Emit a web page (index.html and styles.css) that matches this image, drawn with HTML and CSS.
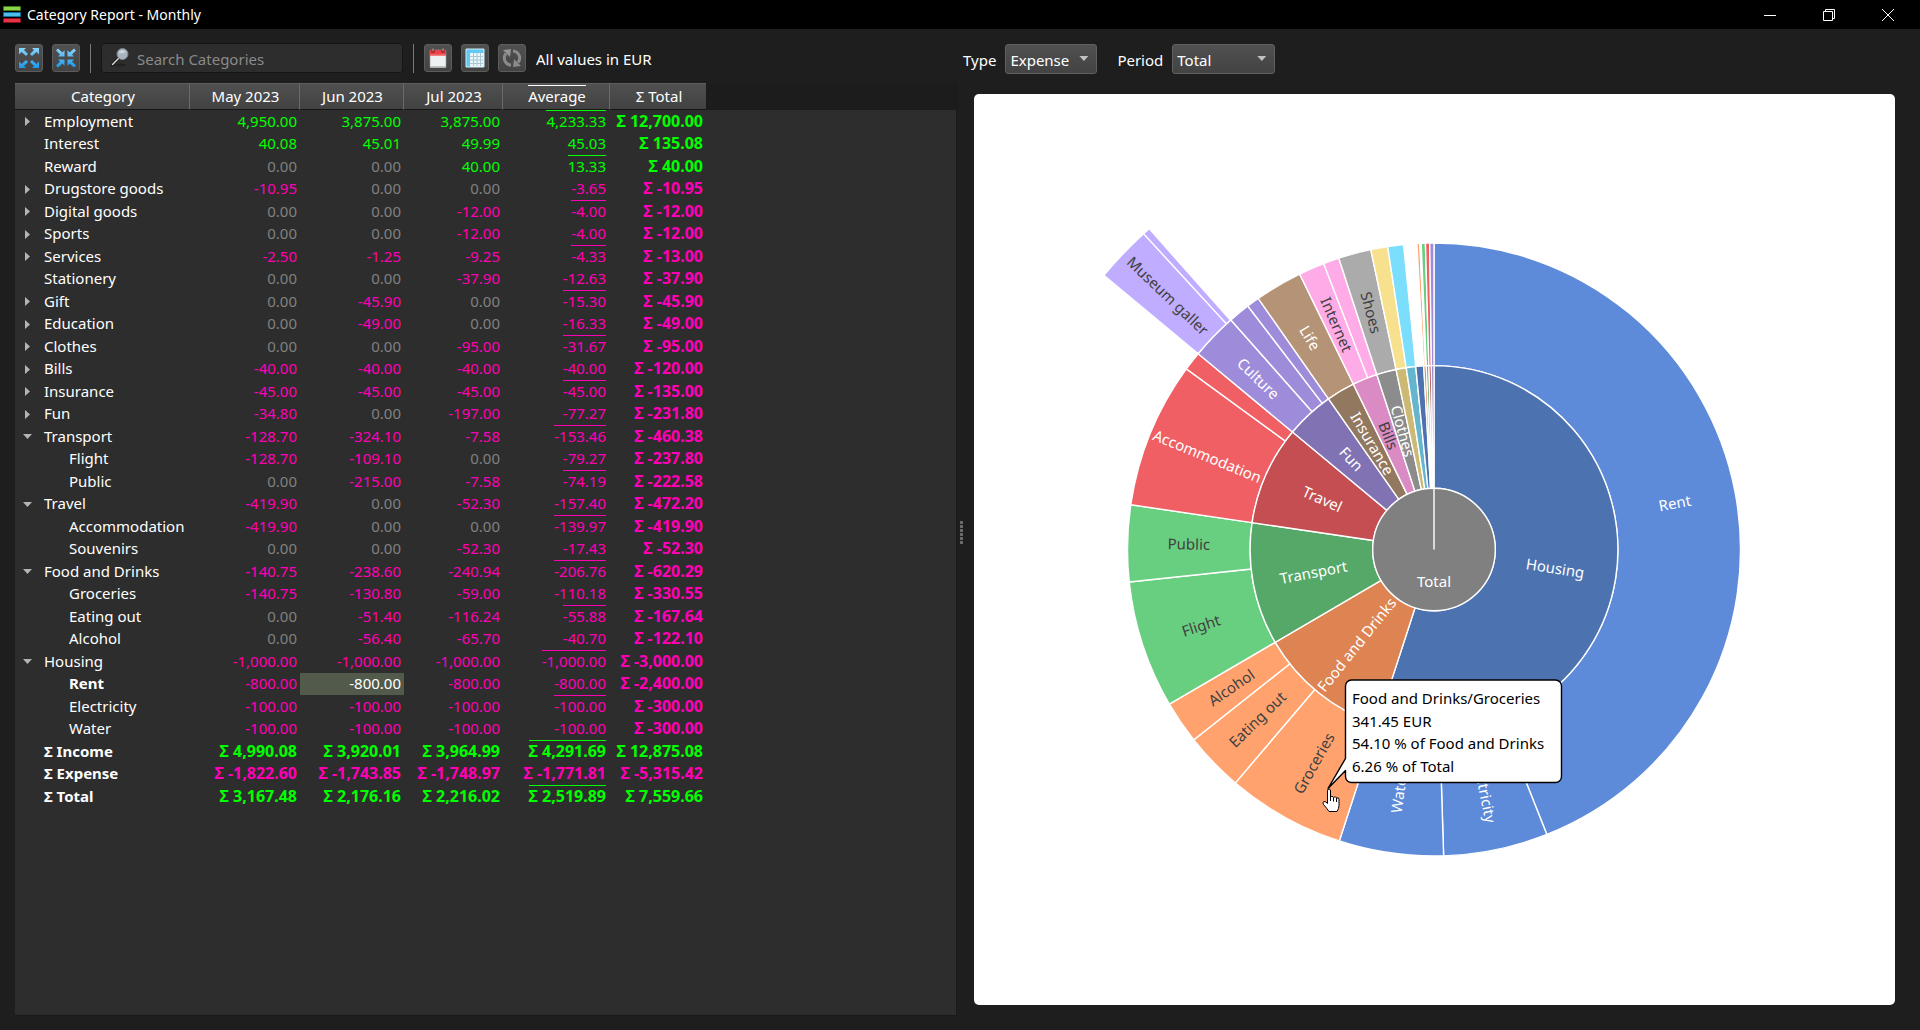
FILE: index.html
```html
<!DOCTYPE html>
<html lang="en">
<head>
<meta charset="utf-8">
<title>Category Report - Monthly</title>
<link rel="stylesheet" href="styles.css">
</head>
<body>
<header class="titlebar">
  <svg class="app-icon" viewBox="0 0 18 18" aria-hidden="true">
    <rect x="0" y="0" width="18" height="5" rx="1" fill="#3f7d1c"/><rect x="1" y="1" width="16" height="3" fill="#8fd14a"/>
    <rect x="0" y="6" width="18" height="5" rx="1" fill="#14709e"/><rect x="1" y="7" width="16" height="3" fill="#4dbdea"/>
    <rect x="0" y="12" width="18" height="5" rx="1" fill="#8a0f1c"/><rect x="1" y="13" width="16" height="3" fill="#e63345"/>
  </svg>
  <h1 class="title">Category Report - Monthly</h1>
  <div class="window-buttons">
    <button type="button" class="window-button" aria-label="Minimize"><svg viewBox="0 0 14 14"><path d="M1 7.500H13"/></svg></button>
    <button type="button" class="window-button" aria-label="Restore"><svg viewBox="0 0 14 14"><path d="M1.500 3.500H10.500V12.500H1.500ZM3.500 3.500V1.500H12.500V10.500H10.500"/></svg></button>
    <button type="button" class="window-button" aria-label="Close"><svg viewBox="0 0 14 14"><path d="M1 1L13 13M13 1L1 13"/></svg></button>
  </div>
</header>
<main class="workspace">
  <section class="report">
    <div class="toolbar">
      <div class="tool-group">
        <button type="button" class="tool-button" aria-label="Expand all">
          <svg viewBox="0 0 20 20"><defs><linearGradient id="blue" gradientUnits="userSpaceOnUse" x1="0" y1="0" x2="0" y2="20"><stop offset="0" stop-color="#8ad4fb"/><stop offset="1" stop-color="#1a97ec"/></linearGradient></defs>
          <path fill="url(#blue)" d="M0 0H7L5 2L9 6L7 8L2.500 4L0 6.500ZM20 0H13L15 2L11 6L13 8L17.500 4L20 6.500ZM0 20H7L5 18L9 14L7 12L2.500 16L0 13.500ZM20 20H13L15 18L11 14L13 12L17.500 16L20 13.500Z"/></svg>
        </button>
        <button type="button" class="tool-button" aria-label="Collapse all">
          <svg viewBox="0 0 20 20"><path fill="url(#blue)" d="M8.500 8.500H2L4 6.500L0 2.500L2 .5L6.500 4.500L8.500 2ZM11.500 8.500H18L16 6.500L20 2.500L18 .5L13.500 4.500L11.500 2ZM8.500 11.500H2L4 13.500L0 17.500L2 19.500L6.500 15.500L8.500 18ZM11.500 11.500H18L16 13.500L20 17.500L18 19.500L13.500 15.500L11.500 18Z"/></svg>
        </button>
      </div>
      <span class="divider"></span>
      <label class="search">
        <svg viewBox="0 0 20 20" aria-hidden="true"><ellipse cx="9" cy="17" rx="6" ry="1.500" fill="#222"/><path d="M7 11L1 17" stroke="#111" stroke-width="3" stroke-linecap="round"/><path d="M7.500 10.500L1.500 16.500" stroke="#d8d8d8" stroke-width="1.500" stroke-linecap="round"/><circle cx="11.500" cy="6" r="5.500" fill="#a9b4bf" stroke="#79838c"/><path d="M8 4Q11 0 15 4Q12 6 8 5Z" fill="#ccd5dd"/></svg>
        <input type="text" placeholder="Search Categories" aria-label="Search Categories">
      </label>
      <span class="divider"></span>
      <div class="tool-group">
        <button type="button" class="tool-button" aria-label="Monthly">
          <svg viewBox="0 0 20 20"><rect x="2" y="2" width="16" height="17.500" rx="1" fill="#eef1f1" stroke="#999" stroke-width=".6"/><path d="M2 2H18V8H2Z" fill="#e8444a"/><path d="M2 6.500H18V8H2Z" fill="#f77d80"/><circle cx="5" cy="3" r="1.800" fill="#8d1318"/><circle cx="15" cy="3" r="1.800" fill="#8d1318"/><path d="M5 .5V3.500M15 .5V3.500" stroke="#bbb"/><path d="M2 18H18V19.500H2Z" fill="#bcc6c6"/></svg>
        </button>
        <button type="button" class="tool-button" aria-label="Table view">
          <svg viewBox="0 0 20 20"><rect x="1" y="1" width="18" height="18" fill="#e8f7fd"/><path d="M1 1H19V5H5V19H1Z" fill="#62c9f3"/><path d="M5 8.500H18M5 12H18M5 15.500H18M8.500 5V18M12 5V18M15.500 5V18" stroke="#a9c6d2"/><path d="M1 1H19V19H1Z" fill="none" stroke="#cfeefb"/></svg>
        </button>
        <button type="button" class="tool-button" aria-label="Refresh" disabled>
          <svg viewBox="0 0 20 20"><g fill="none" stroke="#8a8a8a" stroke-width="3"><path d="M9 17A7 7 0 0 1 4 5.500"/><path d="M11 3A7 7 0 0 1 16 14.500"/></g><path d="M1 2L9 1L8 9Z" fill="#949494"/><path d="M19 18L11 19L12 11Z" fill="#8a8a8a"/></svg>
        </button>
      </div>
      <span class="note">All values in EUR</span>
    </div>
    <div class="table-pane">
      <table class="report-table">
        <colgroup><col class="c-category"><col class="c-may"><col class="c-jun"><col class="c-jul"><col class="c-average"><col class="c-total"></colgroup>
        <thead><tr><th scope="col">Category</th><th scope="col">May 2023</th><th scope="col">Jun 2023</th><th scope="col">Jul 2023</th><th scope="col"><span class="bar">Average</span></th><th scope="col">Σ Total</th></tr></thead>
        <tbody>
          <tr class="in"><th scope="row"><button type="button" class="twist" aria-label="Expand Employment"></button>Employment</th><td>4,950.00</td><td>3,875.00</td><td>3,875.00</td><td><span class="bar">4,233.33</span></td><td>Σ 12,700.00</td></tr>
          <tr class="in"><th scope="row">Interest</th><td>40.08</td><td>45.01</td><td>49.99</td><td><span class="bar">45.03</span></td><td>Σ 135.08</td></tr>
          <tr class="in"><th scope="row">Reward</th><td class="zero">0.00</td><td class="zero">0.00</td><td>40.00</td><td><span class="bar">13.33</span></td><td>Σ 40.00</td></tr>
          <tr><th scope="row"><button type="button" class="twist" aria-label="Expand Drugstore goods"></button>Drugstore goods</th><td>-10.95</td><td class="zero">0.00</td><td class="zero">0.00</td><td><span class="bar">-3.65</span></td><td>Σ -10.95</td></tr>
          <tr><th scope="row"><button type="button" class="twist" aria-label="Expand Digital goods"></button>Digital goods</th><td class="zero">0.00</td><td class="zero">0.00</td><td>-12.00</td><td><span class="bar">-4.00</span></td><td>Σ -12.00</td></tr>
          <tr><th scope="row"><button type="button" class="twist" aria-label="Expand Sports"></button>Sports</th><td class="zero">0.00</td><td class="zero">0.00</td><td>-12.00</td><td><span class="bar">-4.00</span></td><td>Σ -12.00</td></tr>
          <tr><th scope="row"><button type="button" class="twist" aria-label="Expand Services"></button>Services</th><td>-2.50</td><td>-1.25</td><td>-9.25</td><td><span class="bar">-4.33</span></td><td>Σ -13.00</td></tr>
          <tr><th scope="row">Stationery</th><td class="zero">0.00</td><td class="zero">0.00</td><td>-37.90</td><td><span class="bar">-12.63</span></td><td>Σ -37.90</td></tr>
          <tr><th scope="row"><button type="button" class="twist" aria-label="Expand Gift"></button>Gift</th><td class="zero">0.00</td><td>-45.90</td><td class="zero">0.00</td><td><span class="bar">-15.30</span></td><td>Σ -45.90</td></tr>
          <tr><th scope="row"><button type="button" class="twist" aria-label="Expand Education"></button>Education</th><td class="zero">0.00</td><td>-49.00</td><td class="zero">0.00</td><td><span class="bar">-16.33</span></td><td>Σ -49.00</td></tr>
          <tr><th scope="row"><button type="button" class="twist" aria-label="Expand Clothes"></button>Clothes</th><td class="zero">0.00</td><td class="zero">0.00</td><td>-95.00</td><td><span class="bar">-31.67</span></td><td>Σ -95.00</td></tr>
          <tr><th scope="row"><button type="button" class="twist" aria-label="Expand Bills"></button>Bills</th><td>-40.00</td><td>-40.00</td><td>-40.00</td><td><span class="bar">-40.00</span></td><td>Σ -120.00</td></tr>
          <tr><th scope="row"><button type="button" class="twist" aria-label="Expand Insurance"></button>Insurance</th><td>-45.00</td><td>-45.00</td><td>-45.00</td><td><span class="bar">-45.00</span></td><td>Σ -135.00</td></tr>
          <tr><th scope="row"><button type="button" class="twist" aria-label="Expand Fun"></button>Fun</th><td>-34.80</td><td class="zero">0.00</td><td>-197.00</td><td><span class="bar">-77.27</span></td><td>Σ -231.80</td></tr>
          <tr><th scope="row"><button type="button" class="twist open" aria-label="Collapse Transport"></button>Transport</th><td>-128.70</td><td>-324.10</td><td>-7.58</td><td><span class="bar">-153.46</span></td><td>Σ -460.38</td></tr>
          <tr class="child"><th scope="row">Flight</th><td>-128.70</td><td>-109.10</td><td class="zero">0.00</td><td><span class="bar">-79.27</span></td><td>Σ -237.80</td></tr>
          <tr class="child"><th scope="row">Public</th><td class="zero">0.00</td><td>-215.00</td><td>-7.58</td><td><span class="bar">-74.19</span></td><td>Σ -222.58</td></tr>
          <tr><th scope="row"><button type="button" class="twist open" aria-label="Collapse Travel"></button>Travel</th><td>-419.90</td><td class="zero">0.00</td><td>-52.30</td><td><span class="bar">-157.40</span></td><td>Σ -472.20</td></tr>
          <tr class="child"><th scope="row">Accommodation</th><td>-419.90</td><td class="zero">0.00</td><td class="zero">0.00</td><td><span class="bar">-139.97</span></td><td>Σ -419.90</td></tr>
          <tr class="child"><th scope="row">Souvenirs</th><td class="zero">0.00</td><td class="zero">0.00</td><td>-52.30</td><td><span class="bar">-17.43</span></td><td>Σ -52.30</td></tr>
          <tr><th scope="row"><button type="button" class="twist open" aria-label="Collapse Food and Drinks"></button>Food and Drinks</th><td>-140.75</td><td>-238.60</td><td>-240.94</td><td><span class="bar">-206.76</span></td><td>Σ -620.29</td></tr>
          <tr class="child"><th scope="row">Groceries</th><td>-140.75</td><td>-130.80</td><td>-59.00</td><td><span class="bar">-110.18</span></td><td>Σ -330.55</td></tr>
          <tr class="child"><th scope="row">Eating out</th><td class="zero">0.00</td><td>-51.40</td><td>-116.24</td><td><span class="bar">-55.88</span></td><td>Σ -167.64</td></tr>
          <tr class="child"><th scope="row">Alcohol</th><td class="zero">0.00</td><td>-56.40</td><td>-65.70</td><td><span class="bar">-40.70</span></td><td>Σ -122.10</td></tr>
          <tr><th scope="row"><button type="button" class="twist open" aria-label="Collapse Housing"></button>Housing</th><td>-1,000.00</td><td>-1,000.00</td><td>-1,000.00</td><td><span class="bar">-1,000.00</span></td><td>Σ -3,000.00</td></tr>
          <tr class="child current"><th scope="row">Rent</th><td>-800.00</td><td class="selected">-800.00</td><td>-800.00</td><td><span class="bar">-800.00</span></td><td>Σ -2,400.00</td></tr>
          <tr class="child"><th scope="row">Electricity</th><td>-100.00</td><td>-100.00</td><td>-100.00</td><td><span class="bar">-100.00</span></td><td>Σ -300.00</td></tr>
          <tr class="child"><th scope="row">Water</th><td>-100.00</td><td>-100.00</td><td>-100.00</td><td><span class="bar">-100.00</span></td><td>Σ -300.00</td></tr>
          <tr class="in sum"><th scope="row">Σ Income</th><td>Σ 4,990.08</td><td>Σ 3,920.01</td><td>Σ 3,964.99</td><td><span class="bar">Σ 4,291.69</span></td><td>Σ 12,875.08</td></tr>
          <tr class="sum"><th scope="row">Σ Expense</th><td>Σ -1,822.60</td><td>Σ -1,743.85</td><td>Σ -1,748.97</td><td><span class="bar">Σ -1,771.81</span></td><td>Σ -5,315.42</td></tr>
          <tr class="in sum"><th scope="row">Σ Total</th><td>Σ 3,167.48</td><td>Σ 2,176.16</td><td>Σ 2,216.02</td><td><span class="bar">Σ 2,519.89</span></td><td>Σ 7,559.66</td></tr>
        </tbody>
      </table>
    </div>
  </section>
  <div class="splitter" aria-hidden="true"><i></i><i></i><i></i><i></i><i></i><i></i></div>
  <section class="chart">
    <div class="filters">
      <label for="type">Type</label>
      <span class="dropdown type"><select id="type"><option>Expense</option><option>Income</option></select></span>
      <label for="period">Period</label>
      <span class="dropdown period"><select id="period"><option>Total</option><option>May 2023</option><option>Jun 2023</option><option>Jul 2023</option></select></span>
    </div>
    <div class="chart-card">
      <svg class="sunburst" viewBox="-460 -455.5 921 911" role="img" aria-label="Expenses by category">
        <g id="slices"></g>
        <g id="labels"></g>
        <g class="tip">
          <path d="M-82.500 130.500H121.500A6 6 0 0 1 127.500 136.500V227A6 6 0 0 1 121.500 233H-82.500A6 6 0 0 1 -88.500 227V221L-106 239L-88.500 209V136.500A6 6 0 0 1 -82.500 130.500Z"/>
          <text x="-82" y="154">Food and Drinks/Groceries</text>
          <text x="-82" y="177">341.45 EUR</text>
          <text x="-82" y="199">54.10 % of Food and Drinks</text>
          <text x="-82" y="222">6.26 % of Total</text>
        </g>
        <path class="hand" d="M-106.500 241.500Q-106.500 239.500 -105 239.500T-103.500 241.500V247.500Q-102 245.500 -100.500 248Q-98.500 246 -97.500 248.500Q-95 247.500 -95 250V256Q-95 259 -97 262H-105Q-107 259 -110.500 255Q-112 252.500 -110 252Q-108 252 -106.500 254Z"/>
        <path class="fingers" d="M-103.500 247V251.500M-100.500 248V252M-97.500 248.500V252.500"/>
      </svg>
    </div>
  </section>
</main>
<script src="chart.js"></script>
</body>
</html>
```
FILE: styles.css
```css
* { box-sizing: border-box; }

body {
  margin: 0;
  min-height: 100vh;
  display: flex;
  flex-direction: column;
  background: #1e1e1e;
  color: #fff;
  font: 15px/22px "Noto Sans", "Open Sans", sans-serif;
}

button, input, select { font: inherit; color: inherit; }

.titlebar {
  display: flex;
  align-items: center;
  height: 29px;
  padding: 0 3px;
  background: #000;
}
.app-icon { width: 18px; height: 18px; }
.title { margin: 0 auto 0 6px; font-size: 14px; font-weight: 400; }
.window-buttons { display: flex; }
.window-button {
  width: 59px;
  height: 29px;
  padding: 0;
  border: 0;
  background: none;
  display: grid;
  place-items: center;
}
.window-button svg { width: 14px; height: 14px; fill: none; stroke: #fff; stroke-width: 1; }

.workspace {
  flex: 1;
  display: grid;
  grid-template-columns: minmax(0, 942fr) 6px minmax(0, 957fr);
  padding-left: 15px;
}

.report { display: flex; flex-direction: column; padding: 14px 0; }
.toolbar { display: flex; align-items: center; gap: 10px; height: 30px; margin-bottom: 10px; }
.tool-group { display: flex; gap: 9px; }
.tool-button {
  width: 28px;
  height: 28px;
  padding: 3px;
  border: 1px solid #5c5c5c;
  border-radius: 3px;
  background: linear-gradient(#505050, #434343);
}
.tool-button svg { display: block; width: 20px; height: 20px; }
.divider { width: 1px; height: 29px; background: #7a7a7a; }
.search {
  flex: 0 0 302px;
  display: flex;
  align-items: center;
  gap: 6px;
  height: 30px;
  padding: 0 9px;
  border: 1px solid #161616;
  border-radius: 3px;
  background: #2d2d2d;
}
.search svg { width: 20px; height: 20px; }
.search input { flex: 1; min-width: 0; padding: 2px 0 0; border: 0; outline: 0; background: none; }
.search input::placeholder { color: #8a8a8a; opacity: 1; }
.note { padding-top: 2px; }

.table-pane { flex: 1; background: linear-gradient(#1c1c1c 27px, #2d2d2d 27px); border-right: 1px solid #191919; border-bottom: 1px solid #191919; }
.report-table { width: 691px; table-layout: fixed; border-collapse: separate; border-spacing: 0; }
.c-category { width: 175px; }
.c-may { width: 110px; }
.c-jun { width: 104px; }
.c-jul { width: 99px; }
.c-average { width: 107px; }
.c-total { width: 96px; }

thead th {
  height: 27px;
  padding: 1px 0 2px 2px;
  font-weight: 400;
  line-height: 22px;
  vertical-align: top;
  background: linear-gradient(#505050, #424242);
  border-top: 1px solid #5e5e5e;
  border-bottom: 1px solid #161616;
  border-right: 1px solid #6a6a6a;
}
thead th:last-child { border-right: 0; }
thead .bar { display: inline-block; border-top: 1px solid; line-height: 20px; vertical-align: top; }

tbody tr { height: 22px; color: #ff00b4; line-height: 21px; }
tbody tr:nth-child(odd) { height: 23px; }
tbody th, tbody td { padding: 0 3px 1px 0; white-space: nowrap; vertical-align: bottom; text-align: right; }
tbody th { padding: 0 0 1px 29px; position: relative; font-weight: 400; text-align: left; color: #fff; }
tbody td:nth-child(5) { padding-right: 4px; }
tbody .bar { display: inline-block; vertical-align: bottom; }
tbody tr:nth-child(odd) .bar { border-top: 1px solid; }
tbody td:last-child, .sum th, .sum td, .current th { font-weight: 700; }
tbody td:last-child, .sum td { font-size: 16px; }
tbody .in { color: #0f0; }
tbody .child th { padding-left: 54px; }
tbody .zero { color: #808080; }
tbody .selected { background: #525a4b; color: #fff; }

/* Expander arrow in the free space before a category name */
.twist {
  position: absolute;
  left: 10px;
  top: 7px;
  width: 5px;
  height: 9px;
  padding: 0;
  border: 0;
  background: #b4b4b4;
  clip-path: polygon(0 0, 100% 50%, 0 100%);
}
.twist.open { left: 8px; top: 9px; width: 9px; height: 5px; clip-path: polygon(0 0, 100% 0, 50% 100%); }

.splitter { display: flex; flex-direction: column; justify-content: center; align-items: flex-end; gap: 1px; padding-top: 6px; }
.splitter i { width: 3px; height: 3px; background: #6a6a6a; }

.chart { display: flex; flex-direction: column; padding: 15px 25px 25px 0; }
.filters { display: flex; align-items: center; gap: 9px; height: 30px; margin-bottom: 20px; }
.filters label { padding-top: 2px; }
.dropdown { position: relative; height: 30px; }
.dropdown.type { width: 92px; margin-right: 11px; }
.dropdown.period { width: 103px; }
.dropdown select {
  width: 100%;
  height: 30px;
  padding: 2px 4px 0;
  appearance: none;
  border: 1px solid #606060;
  border-radius: 3px;
  background: linear-gradient(#505050, #434343);
}
.dropdown::after {
  content: "";
  position: absolute;
  right: 9px;
  top: 12px;
  width: 9px;
  height: 5px;
  background: #c0c0c0;
  clip-path: polygon(0 0, 100% 0, 50% 100%);
  pointer-events: none;
}

.chart-card { flex: 1; display: flex; margin-left: 11px; border-radius: 5px; background: #fff; }
.sunburst { flex: 1; width: 100%; min-height: 400px; }
.slice { stroke: #fff; stroke-width: 1.4px; }
.label { font-size: 15px; text-anchor: middle; fill: #fff; }
.label.dark { fill: #404040; }
.tip path { fill: #fff; stroke: #000; stroke-width: 1.4px; stroke-linejoin: round; }
.tip text { font-size: 15px; fill: #000; }
.hand { fill: #fff; stroke: #000; }
.fingers { fill: none; stroke: #000; }
```
FILE: chart.js
```js
// Slices: ring, start angle, end angle (degrees clockwise from the top), colour, label, dark label
const RING = 61.3;
const SLICES = [
  [3, 309.7, 317.4, '#c0adff', 'Museum galler', true],
  [3, 317.4, 318.4, '#c0adff'],
  [2, 0, 158.4, '#5d8bd9', 'Rent'],
  [2, 158.4, 178.2, '#5d8bd9', 'Electricity'],
  [2, 178.2, 198, '#5d8bd9', 'Water'],
  [2, 198, 220.4, '#ffa26d', 'Groceries', true],
  [2, 220.4, 231.6, '#ffa26d', 'Eating out', true],
  [2, 231.6, 239.7, '#ffa26d', 'Alcohol', true],
  [2, 239.7, 263.9, '#69cf80', 'Flight', true],
  [2, 263.9, 278.4, '#69cf80', 'Public', true],
  [2, 278.4, 306.1, '#f05f64', 'Accommodation'],
  [2, 306.1, 309.7, '#f05f64'],
  [2, 309.7, 318.5, '#9e8cdb', 'Culture'],
  [2, 318.5, 322.6, '#9e8cdb'],
  [2, 322.6, 325, '#9e8cdb'],
  [2, 325, 334, '#b49376', 'Life'],
  [2, 334, 338.9, '#ffabe8', 'Internet', true],
  [2, 338.9, 341.9, '#ffabe8'],
  [2, 341.9, 348.1, '#ababab', 'Shoes', true],
  [2, 348.1, 351.3, '#f8e18e'],
  [2, 351.3, 354.3, '#7bdefc'],
  [2, 356.8, 357.35, '#ffa26d'],
  [2, 357.35, 357.6, '#ffa26d'],
  [2, 357.6, 358.4, '#69cf80'],
  [2, 358.4, 359.2, '#f05f64'],
  [2, 359.2, 360, '#9e8cdb'],
  [1, 0, 198, '#4c72b0', 'Housing'],
  [1, 198, 239.7, '#dd8452', 'Food and Drinks'],
  [1, 239.7, 278.4, '#55a868', 'Transport'],
  [1, 278.4, 309.7, '#c44e52', 'Travel'],
  [1, 309.7, 325, '#8172b3', 'Fun'],
  [1, 325, 334, '#937860', 'Insurance'],
  [1, 334, 341.9, '#da8bc3', 'Bills', true],
  [1, 341.9, 348.1, '#8c8c8c', 'Clothes'],
  [1, 348.1, 351.3, '#ccb974'],
  [1, 351.3, 354.3, '#64b5cd'],
  [1, 354.3, 356.8, '#4c72b0'],
  [1, 356.8, 357.6, '#dd8452'],
  [1, 357.6, 358.4, '#55a868'],
  [1, 358.4, 359.2, '#c44e52'],
  [1, 359.2, 360, '#8172b3'],
];

function point(radius, degrees) {
  const a = degrees * Math.PI / 180;
  return (radius * Math.sin(a)).toFixed(2) + ' ' + (-radius * Math.cos(a)).toFixed(2);
}

function add(parent, name, attributes, text) {
  const node = document.createElementNS('http://www.w3.org/2000/svg', name);
  for (const key in attributes) node.setAttribute(key, attributes[key]);
  if (text) node.textContent = text;
  document.getElementById(parent).append(node);
}

for (const [ring, from, to, fill, text, dark] of SLICES) {
  const inner = RING * (2 * ring - 1);
  const outer = RING * (2 * ring + 1);
  const large = to - from > 180 ? 1 : 0;
  add('slices', 'path', {
    class: 'slice',
    fill,
    d: `M${point(inner, from)}L${point(outer, from)}A${outer} ${outer} 0 ${large} 1 ${point(outer, to)}` +
       `L${point(inner, to)}A${inner} ${inner} 0 ${large} 0 ${point(inner, from)}Z`,
  });
  if (text) {
    const middle = (from + to) / 2;
    const turn = middle < 180 ? middle - 90 : middle + 90;
    add('labels', 'text', {
      class: dark ? 'label dark' : 'label',
      transform: `translate(${point((inner + outer) / 2, middle)}) rotate(${turn.toFixed(2)})`,
      dy: 5,
    }, text);
  }
}

add('slices', 'circle', { class: 'slice', r: RING, fill: '#808080' });
add('slices', 'path', { class: 'slice', d: `M0 0V${-RING}` });
add('labels', 'text', { class: 'label', y: 37 }, 'Total');
```
